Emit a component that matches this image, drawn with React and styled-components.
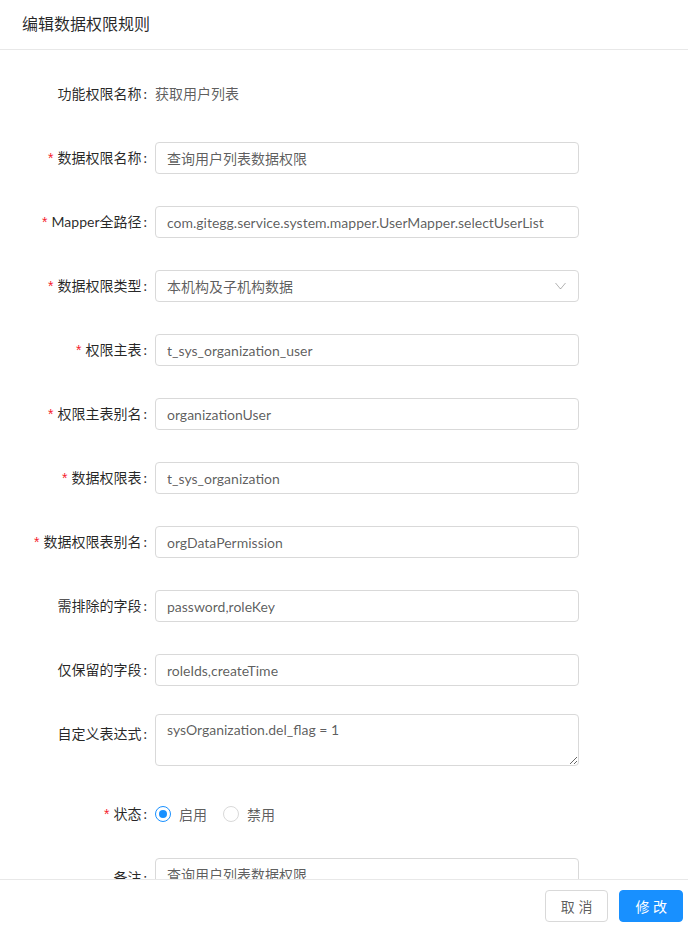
import React from 'react';
import styled, { createGlobalStyle } from 'styled-components';

const GlobalStyle = createGlobalStyle`
  html, body {
    margin: 0;
    padding: 0;
    background: #fff;
  }
  body {
    font-family: "Lato", "Noto Sans CJK SC", sans-serif;
    font-size: 14px;
    color: rgba(0, 0, 0, 0.65);
  }
  * {
    box-sizing: border-box;
  }
`;

const Drawer = styled.div`
  display: flex;
  flex-direction: column;
  height: 100vh;
  background: #fff;
`;

const Scroller = styled.div`
  flex: 1;
  overflow-y: auto;
  &::-webkit-scrollbar {
    width: 4px;
  }
  &::-webkit-scrollbar-track {
    background: transparent;
    margin-top: 12px;
  }
  &::-webkit-scrollbar-thumb {
    background: #c1c1c1;
  }
`;

const Header = styled.div`
  padding: 13px 22px 14px;
  border-bottom: 1px solid #e8e8e8;
`;

const Title = styled.div`
  font-size: 16px;
  line-height: 22px;
  color: rgba(0, 0, 0, 0.85);
`;

const Body = styled.div`
  padding: 24px 0 20px;
`;

const FormItem = styled.div`
  display: grid;
  grid-template-columns: 155px 424px;
  margin-bottom: ${(p) => (p.$gap === undefined ? 24 : p.$gap)}px;
`;

const Label = styled.label`
  height: 40px;
  line-height: 40px;
  text-align: right;
  white-space: nowrap;
  color: rgba(0, 0, 0, 0.85);

  &::before {
    content: ${(p) => (p.$required ? '"*"' : 'none')};
    display: inline-block;
    margin-right: 4px;
    color: #f5222d;
    font-family: SimSun, sans-serif;
    font-size: 14px;
    line-height: 1;
  }

  &::after {
    content: ':';
    margin: 0 8px 0 2px;
  }
`;

const Control = styled.div`
  min-height: 40px;
  display: flex;
  align-items: ${(p) => (p.$top ? 'flex-start' : 'center')};
`;

const StaticText = styled.span`
  color: rgba(0, 0, 0, 0.65);
  line-height: 40px;
`;

const Input = styled.input`
  width: 100%;
  height: 32px;
  padding: 4px 11px;
  border: 1px solid #d9d9d9;
  border-radius: 4px;
  font: inherit;
  font-size: 14px;
  color: rgba(0, 0, 0, 0.65);
  background: #fff;
  outline: none;
`;

const TextArea = styled.textarea`
  width: 100%;
  height: 52px;
  padding: 4px 11px;
  border: 1px solid #d9d9d9;
  border-radius: 4px;
  font: inherit;
  font-size: 14px;
  line-height: 1.5;
  color: rgba(0, 0, 0, 0.65);
  resize: vertical;
  outline: none;
  display: block;
`;

const SelectBox = styled.div`
  width: 100%;
  height: 32px;
  padding: 0 11px;
  display: flex;
  align-items: center;
  justify-content: space-between;
  border: 1px solid #d9d9d9;
  border-radius: 4px;
  color: rgba(0, 0, 0, 0.65);
  background: #fff;
`;

const Arrow = styled.svg`
  width: 11px;
  height: 8px;
  margin-right: 1px;
`;

const RadioGroup = styled.div`
  display: flex;
  align-items: center;
  height: 40px;
`;

const RadioItem = styled.label`
  display: inline-flex;
  align-items: center;
  margin-right: 8px;
  cursor: pointer;
`;

const RadioDot = styled.span`
  position: relative;
  width: 16px;
  height: 16px;
  border-radius: 50%;
  border: 1px solid ${(p) => (p.$checked ? '#1890ff' : '#d9d9d9')};
  background: #fff;

  &::after {
    content: '';
    position: absolute;
    left: 3px;
    top: 3px;
    width: 8px;
    height: 8px;
    border-radius: 50%;
    background: #1890ff;
    display: ${(p) => (p.$checked ? 'block' : 'none')};
  }
`;

const RadioText = styled.span`
  padding: 0 8px;
  color: rgba(0, 0, 0, 0.65);
`;

const Footer = styled.div`
  height: 52px;
  padding: 10px 5px 0 0;
  border-top: 1px solid #e8e8e8;
  display: flex;
  justify-content: flex-end;
  gap: 11px;
  background: #fff;
`;

const Button = styled.button`
  height: 32px;
  padding: 0 15px;
  border-radius: 4px;
  font: inherit;
  font-size: 14px;
  border: 1px solid ${(p) => (p.$primary ? '#1890ff' : '#d9d9d9')};
  background: ${(p) => (p.$primary ? '#1890ff' : '#fff')};
  color: ${(p) => (p.$primary ? '#fff' : 'rgba(0, 0, 0, 0.65)')};
  cursor: pointer;
`;

const fields = [
  { label: '数据权限名称', value: '查询用户列表数据权限', required: true },
  { label: 'Mapper全路径', value: 'com.gitegg.service.system.mapper.UserMapper.selectUserList', required: true },
  { label: '数据权限类型', value: '本机构及子机构数据', required: true, select: true },
  { label: '权限主表', value: 't_sys_organization_user', required: true },
  { label: '权限主表别名', value: 'organizationUser', required: true },
  { label: '数据权限表', value: 't_sys_organization', required: true },
  { label: '数据权限表别名', value: 'orgDataPermission', required: true },
  { label: '需排除的字段', value: 'password,roleKey' },
  { label: '仅保留的字段', value: 'roleIds,createTime' },
];

const App = () => {
  return (
    <Drawer>
      <GlobalStyle />
      <Scroller>
        <Header>
          <Title>编辑数据权限规则</Title>
        </Header>
        <Body>
          <FormItem>
            <Label>功能权限名称</Label>
            <Control>
              <StaticText>获取用户列表</StaticText>
            </Control>
          </FormItem>

          {fields.map((f) => (
            <FormItem key={f.label}>
              <Label $required={f.required}>{f.label}</Label>
              <Control>
                {f.select ? (
                  <SelectBox>
                    <span>{f.value}</span>
                    <Arrow viewBox="0 0 11 8">
                      <polyline
                        points="0.5,1 5.5,7 10.5,1"
                        fill="none"
                        stroke="rgba(0,0,0,0.3)"
                        strokeWidth="1"
                      />
                    </Arrow>
                  </SelectBox>
                ) : (
                  <Input defaultValue={f.value} />
                )}
              </Control>
            </FormItem>
          ))}

          <FormItem $gap={28}>
            <Label>自定义表达式</Label>
            <Control $top>
              <TextArea defaultValue="sysOrganization.del_flag = 1" />
            </Control>
          </FormItem>

          <FormItem $gap={24}>
            <Label $required>状态</Label>
            <Control>
              <RadioGroup>
                <RadioItem>
                  <RadioDot $checked />
                  <RadioText>启用</RadioText>
                </RadioItem>
                <RadioItem>
                  <RadioDot />
                  <RadioText>禁用</RadioText>
                </RadioItem>
              </RadioGroup>
            </Control>
          </FormItem>

          <FormItem $gap={0}>
            <Label>备注</Label>
            <Control $top>
              <Input defaultValue="查询用户列表数据权限" />
            </Control>
          </FormItem>
        </Body>
      </Scroller>
      <Footer>
        <Button>取 消</Button>
        <Button $primary>修 改</Button>
      </Footer>
    </Drawer>
  );
};

export default App;
